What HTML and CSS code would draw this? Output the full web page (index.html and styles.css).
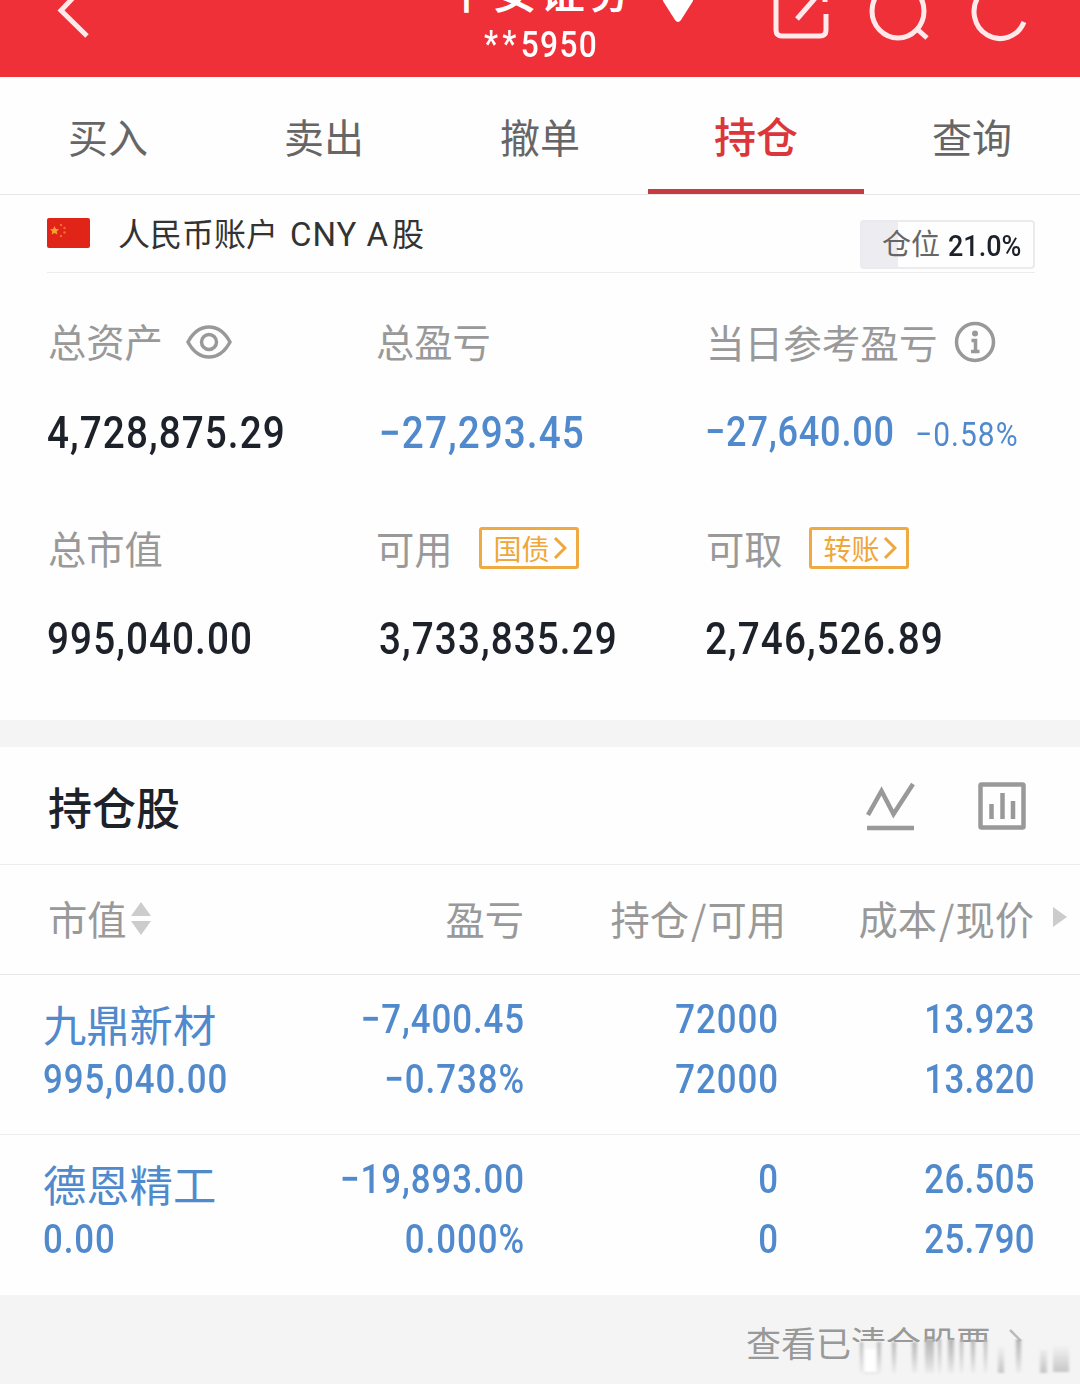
FILE: index.html
```html
<!DOCTYPE html>
<html lang="zh-CN">
<head>
<meta charset="utf-8">
<title>持仓</title>
<link rel="stylesheet" href="styles.css">
</head>
<body>
<header class="topbar">
  <svg class="back" width="100" height="77" viewBox="0 0 100 77"><path d="M87 -17 L61 10.500 L87 36"/></svg>
  <div class="broker">
    <div class="broker-name">平安证券</div>
    <div class="broker-id"><span class="stars">**</span>5950</div>
  </div>
  <svg class="tools" width="430" height="77" viewBox="650 0 430 77">
    <path class="solid" d="M663 -1 H693 V1 L681 20 Q678 24 675 20 L663 1Z"/>
    <path d="M776 -12 V30 Q776 36 782 36 H820 Q826 36 826 30 V14 M797 19 L824 -12 M825 0 V2"/>
    <ellipse cx="898" cy="11" rx="26" ry="27"/><path d="M917 29 L927 38"/>
    <path d="M1024 22 A26 27 0 1 1 1018 -8"/>
  </svg>
</header>
<nav class="tabs">
  <span class="tab">买入</span><span class="tab">卖出</span><span class="tab">撤单</span><span class="tab active">持仓</span><span class="tab">查询</span>
</nav>
<section class="account">
  <svg class="flag" width="43" height="30" viewBox="0 0 43 30"><rect width="43" height="30" rx="2" fill="#e02518"/><path fill="#f6a02d" d="M7.500 8l1.400 3 3.100.3-2.300 2.100.7 3.100-2.900-1.600-2.900 1.600.7-3.100-2.300-2.100 3.100-.3z"/><g fill="#f0702a"><circle cx="14" cy="7" r="1.200"/><circle cx="17.500" cy="10" r="1.200"/><circle cx="17.500" cy="14.500" r="1.200"/><circle cx="14" cy="18" r="1.200"/></g></svg>
  <span class="account-name">人民币账户 <span class="latin">CNY A</span>股</span>
  <span class="position"><span class="position-label">仓位</span><b>21.0%</b></span>
</section>
<section class="stats">
  <div class="stat"><div class="label">总资产<svg class="eye" width="46" height="34" viewBox="0 0 46 34"><path d="M2 17 Q10 2 23 2 T44 17 Q36 32 23 32 T2 17Z"/><circle cx="23" cy="17" r="7.500"/></svg></div><div class="value"><span class="num">4,728,875.29</span></div></div>
  <div class="stat"><div class="label">总盈亏</div><div class="value loss"><span class="num">−27,293.45</span></div></div>
  <div class="stat"><div class="label wide">当日参考盈亏<svg class="info" width="42" height="42" viewBox="0 0 42 42"><circle cx="21" cy="21" r="18.500"/><circle class="dot" cx="21" cy="12.500" r="3"/><path d="M17.500 19.500H21.500V30M17 30.500H25.500"/></svg></div><div class="value loss day"><span class="num">−27,640.00</span><span class="num pct">−0.58%</span></div></div>
  <div class="stat"><div class="label">总市值</div><div class="value"><span class="num">995,040.00</span></div></div>
  <div class="stat"><div class="label">可用<span class="link">国债<svg width="14" height="24" viewBox="0 0 14 24"><path d="M2 2 L12 12 L2 22"/></svg></span></div><div class="value"><span class="num">3,733,835.29</span></div></div>
  <div class="stat"><div class="label">可取<span class="link">转账<svg width="14" height="24" viewBox="0 0 14 24"><path d="M2 2 L12 12 L2 22"/></svg></span></div><div class="value"><span class="num">2,746,526.89</span></div></div>
</section>
<section class="holdings">
  <div class="holdings-head">
    <h2>持仓股</h2>
    <svg width="50" height="50" viewBox="0 0 50 50"><path d="M2 34 L15.500 10 L27.500 33 L47 3 M1 47 H48"/></svg>
    <svg width="50" height="50" viewBox="0 0 50 50"><rect x="3.500" y="3.500" width="43" height="43" rx="1"/><path d="M14.500 23 V38 M25.500 12 V38 M36 20 V38"/></svg>
  </div>
  <div class="row columns">
    <span class="sort">市值<svg width="20" height="34" viewBox="0 0 20 34"><path d="M10 1 L20 15 H0Z M0 20 H20 L10 34Z"/></svg></span>
    <span>盈亏</span><span>持仓<i>/</i>可用</span><span>成本<i>/</i>现价</span>
    <svg class="more" width="15" height="20" viewBox="0 0 15 20"><path d="M0 0 L14 10 L0 20Z"/></svg>
  </div>
  <div class="row stock">
    <div><div class="name">九鼎新材</div><div class="num">995,040.00</div></div>
    <div><div class="num">−7,400.45</div><div class="num">−0.738%</div></div>
    <div class="amount"><div class="num">72000</div><div class="num">72000</div></div>
    <div class="price"><div class="num">13.923</div><div class="num">13.820</div></div>
  </div>
  <div class="row stock">
    <div><div class="name">德恩精工</div><div class="num">0.00</div></div>
    <div><div class="num">−19,893.00</div><div class="num">0.000%</div></div>
    <div class="amount"><div class="num">0</div><div class="num">0</div></div>
    <div class="price"><div class="num">26.505</div><div class="num">25.790</div></div>
  </div>
</section>
<footer class="cleared">
  <span>查看已清仓股票</span>
  <svg class="chevron" width="14" height="24" viewBox="0 0 14 24"><path d="M2 2 L12 12 L2 22"/></svg>
  <svg class="smear" width="230" height="46" viewBox="850 1338 230 46">
    <defs>
      <linearGradient id="down" x1="0" y1="0" x2="0" y2="1"><stop offset="0" stop-color="#b4b4b4"/><stop offset=".55" stop-color="#d0d0d0"/><stop offset="1" stop-color="#ececec"/></linearGradient>
      <linearGradient id="up" x1="0" y1="0" x2="0" y2="1"><stop offset="0" stop-color="#f2f2f2"/><stop offset="1" stop-color="#c5c5c5"/></linearGradient>
      <filter id="soft" x="-5%" width="110%"><feGaussianBlur stdDeviation="1.600 0.800"/></filter>
    </defs>
    <rect x="850" y="1341" width="230" height="43" fill="#f4f4f4"/>
    <g filter="url(#soft)">
      <path fill="#fff" d="M865 1348h11v24h-11z"/>
      <path fill="#e6e6e6" d="M864 1371h14v2h-14z"/>
      <path fill="url(#down)" d="M860 1341h3v31h-3zM877 1341h4v31h-4zM892 1341h4v31h-4zM912 1341h5v31h-5zM925 1338h9v34h-9zM938 1338h3v34h-3zM948 1338h6v34h-6zM960 1338h3v34h-3zM971 1338h4v34h-4zM984 1338h3v34h-3z"/>
      <path fill="url(#up)" d="M998 1345h6v27h-6zM1040 1349h7v23h-7zM1053 1345h16v26h-16z"/>
      <path fill="url(#down)" d="M1016 1338h5v34h-5z"/>
    </g>
  </svg>
</footer>
</body>
</html>
```
FILE: styles.css
```css
* { box-sizing: border-box; }
body { margin: 0; width: 1080px; height: 1384px; overflow: hidden; background: #fefefe; color: #1d2129; font-family: Roboto, "Noto Sans CJK SC", sans-serif; }
svg { display: block; flex: none; fill: none; }

.topbar { height: 77px; background: #f03038; color: #fff; display: grid; grid-template-columns: 432px 218px 430px; overflow: hidden; }
.topbar svg { stroke: #ffe9ea; stroke-width: 5; }
.topbar .solid { fill: #fff; stroke: none; }
.broker { text-align: center; white-space: nowrap; }
.broker-name { font: 500 45px/60px "Noto Sans CJK SC", sans-serif; letter-spacing: 3px; margin: -40px 0 0 -2px; }
.broker-id { font-size: 36px; font-weight: 500; line-height: 42px; letter-spacing: 1.500px; margin-top: 4px; transform: scaleX(.88); }
.stars { letter-spacing: 5px; position: relative; top: -1px; }

.tabs { height: 118px; display: grid; grid-template-columns: repeat(5, 216px); border-bottom: 1px solid #e8e8ea; }
.tab { text-align: center; font: 400 40px/118px "Noto Sans CJK SC", sans-serif; color: #666; height: 117px; }
.tab.active { font-size: 42px; line-height: 116px; font-weight: 500; color: #db363b; border-bottom: 5px solid #c83b42; }

.account { margin: 0 45px 0 47px; height: 78px; border-bottom: 1px solid #ececec; display: flex; align-items: center; }
.account .flag { margin: -1px 29px 0 0; }
.account-name { font-size: 32px; line-height: 74px; padding-top: 3px; margin-left: -1px; color: #333; }
.latin { font-size: 33px; letter-spacing: 1px; margin: 0 3px 0 4px; }
.position { margin-left: auto; margin-top: 22px; width: 175px; height: 49px; border: 2px solid #ebebee; border-radius: 4px; background: linear-gradient(90deg, #ededf1 36px, #fefefe 36px); display: flex; align-items: center; padding-left: 20px; font-size: 29px; line-height: 42px; color: #666; white-space: nowrap; }
.position b { font-weight: 500; color: #1d2129; margin: 2px 0 0 8px; transform: scaleX(.93); transform-origin: left; }

.num { transform: scaleX(.88); transform-origin: left; letter-spacing: 1.200px; white-space: nowrap; }
.stats { height: 447px; padding: 33px 0 0 48px; display: grid; grid-template-columns: 328px 330px 1fr; grid-template-rows: 207px 207px; }
.label { display: flex; align-items: center; height: 70px; font: 400 38.300px/70px "Noto Sans CJK SC", sans-serif; color: #999; }
.label.wide { font-size: 38.600px; }
.label svg { stroke: #999; stroke-width: 3.500; margin-top: 1px; }
.label .eye { margin-left: 23px; }
.label .info { margin-left: 17px; }
.info .dot { fill: #999; stroke: none; }
.value { height: 60px; margin: 27px 0 0 -1px; font-size: 44px; line-height: 60px; font-weight: 500; color: #1d2129; display: flex; }
.stat:nth-child(3n+2) .value { margin-left: 3px; }
.stat:nth-child(n+4) .value { margin-top: 26px; }
.value.loss { color: #5189cd; }
.day .num:first-child { font-size: 42.500px; letter-spacing: .9px; width: 209px; transform: scaleX(.85); }
.value.day { line-height: 58px; }
.value.day .pct { font-size: 34px; font-weight: 400; line-height: 63px; margin-left: 1px; }
.label .link { margin: -1px 0 0 26px; height: 42px; width: 100px; border: 3px solid #efab42; border-radius: 3px; font-size: 28px; line-height: 36px; color: #efa63a; display: flex; align-items: center; padding-left: 12px; }
.label .link svg { stroke: #efa63a; stroke-width: 3; margin: 0 0 0 3px; }

.holdings { border-top: 27px solid #f4f4f4; }
.holdings-head { height: 118px; border-bottom: 1px solid #ececec; display: flex; align-items: center; padding: 0 53px 0 48px; gap: 61px; }
.holdings-head h2 { margin: 0 auto 0 0; font: 500 44px/110px "Noto Sans CJK SC", sans-serif; }
.holdings-head svg { stroke: #999; stroke-width: 4.500; }
.row { display: grid; grid-template-columns: 230px 252px 262px 248px 45px; padding-left: 43px; }
.row > * { text-align: right; }
.row > :first-child { text-align: left; }
.columns { height: 110px; font: 400 39.300px/106px "Noto Sans CJK SC", sans-serif; color: #999; align-items: center; border-bottom: 1px solid #e5e5e5; padding-bottom: 3px; white-space: nowrap; }
.columns i { font-style: normal; padding: 0 1px 0 2px; }
.columns > span:nth-child(n+2) { padding-right: 1px; }
.sort { display: flex; align-items: center; padding-left: 5px; gap: 4px; }
.columns svg { fill: #ccc; }
.more { margin: -2px 0 0 18px; }
.stock { height: 160px; border-bottom: 1px solid #ececec; padding-top: 14px; color: #5189cd; }
.stock:last-child { border: 0; }
.stock .num { font-size: 41px; line-height: 60px; font-weight: 500; letter-spacing: 1.100px; transform: scaleX(.85); transform-origin: right; }
.stock > :first-child .num { transform-origin: left; }
.stock .price .num { letter-spacing: .4px; }
.amount { padding-right: 8px; }
.name { font: 400 43.300px/58px "Noto Sans CJK SC", sans-serif; height: 60px; padding-top: 5px; white-space: nowrap; }

.cleared { height: 90px; background: #f4f4f4; padding-left: 746px; display: flex; align-items: center; position: relative; font: 400 35px/90px "Noto Sans CJK SC", sans-serif; color: #999; white-space: nowrap; }
.cleared > span { position: relative; top: 2px; width: 262px; }
.chevron { stroke: #bbb; stroke-width: 2.500; }
.smear { position: absolute; left: 850px; bottom: 0; }
```
